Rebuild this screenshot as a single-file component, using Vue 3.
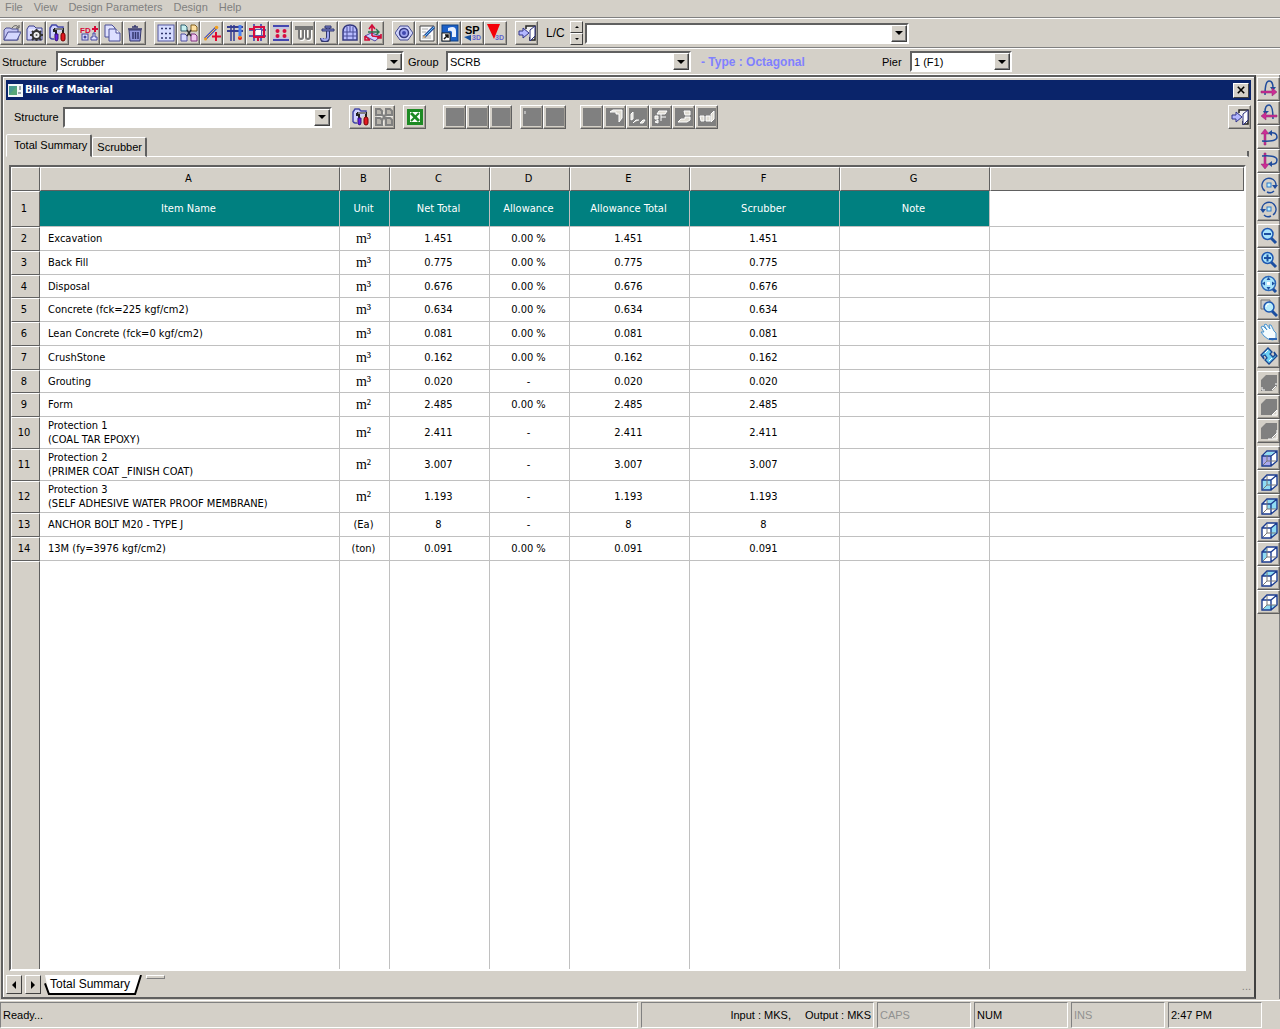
<script setup>
import { ref } from 'vue'

const menus = ['File', 'View', 'Design Parameters', 'Design', 'Help']

const folder = '<path d="M1 16V5l2-3h5l2 2h6v12z" fill="#d4d6ff" stroke="#3b3f8c"/><path d="M3 6h12" stroke="#fff"/>'
const tools = '<path d="M1 14V4l2-3h4l2 2h5v3M1 14l2 1h2" fill="#d0d2ff" stroke="#4448a8" stroke-width="1.500"/><path d="M5 5h10M7 5v5M14 5v4M5 5v3" fill="none" stroke="#222" stroke-width="2"/><path d="M6 5h8" stroke="#ddd"/><path d="M6 10h3v5l-1 2-2-1z" fill="#6820e8" stroke="#301080"/><rect x="12" y="9" width="4" height="8" rx="2" fill="#e01820" stroke="#700"/>'
const door = '<path d="M8 5V2h9v14h-5v-3" fill="#f0f0f0" stroke="#222" stroke-width="1.500"/><path d="M12 6l5-4v10l-5 5z" fill="#fff" stroke="#2a2e80"/><path d="M1 7h4V4l6 5-6 5v-3H1z" fill="#b4b8ff" stroke="#30348c"/>'
const cubeEdges = '<path d="M2 7h9v10H2zM2 7l5-5h10v10l-6 5M11 7l6-5" fill="none" stroke="#1c3c90" stroke-width="1.4"/><path d="M7 3v9h9M7 12l-4 4" fill="none" stroke="#777"/>'
const cube = (face, color = '#8fdcf4') => `<path d="M2 7l5-5h10v10l-6 5H2z" fill="#fff"/><path d="${face}" fill="${color}"/>${cubeEdges}`
const lens = (inner) => `<path d="M11 11l5 5" stroke="#1c4fa0" stroke-width="3"/><circle cx="7.500" cy="7" r="5.500" fill="#a8e4fc" stroke="#1c56b0" stroke-width="1.500"/>${inner}`
const ghost = (d) => `<rect width="18" height="18" fill="#808080"/><path d="${d}" fill="#dedbd2" stroke="#fff"/>`
const solid = (d) => `<path d="M1 6l5-5h11v11l-5 5H1z" fill="#808080"/><path d="${d}" fill="none" stroke="#fff"/>`
const label = (t, x, y, size, color) => `<text x="${x}" y="${y}" font-family="Liberation Sans, sans-serif" font-weight="bold" font-size="${size}" fill="${color}">${t}</text>`

const icons = {
  open: '<path d="M1 16V6l2-2h4l2 1h6v11z" fill="#c4c6f4" stroke="#4a4e90"/><path d="M1 16L5 8h13l-4 8z" fill="#d4d8ff" stroke="#484c90"/><path d="M9 4c2-3 5-3 6-1m1-2v3h-3" fill="none" stroke="#555"/>',
  settings: folder + '<circle cx="10.500" cy="11" r="4" fill="#eee" stroke="#333" stroke-width="2"/><path d="M10.500 5v2m0 8v2M4 11h2m9 0h2M6 7l2 2m5 5l2 2m0-9l-2 2m-5 5l-2 2" stroke="#333" stroke-width="2"/><circle cx="10.500" cy="11" r="1" fill="#555"/>',
  tools,
  fd: label('FD', 0, 9, 8, '#d80838') + '<path d="M15 2v6M12 5h6" stroke="#d80838" stroke-width="2"/><rect x="2" y="10" width="6" height="6" fill="#ddf" stroke="#4448a0"/><circle cx="5" cy="13" r="1.500" fill="#4448a0"/><path d="M13 9h2v4h2v3h-6v-3h2z" fill="#ddf" stroke="#4448a0"/>',
  copy: '<path d="M2 1h7l3 3v9H2z" fill="#e0e2ff" stroke="#4a4e98"/><path d="M6 5h7l4 4v8H6z" fill="#dcdfff" stroke="#4a4e98"/><path d="M13 5v4h4" fill="#fff" stroke="#4a4e98"/>',
  trash: '<path d="M3 6h12l-1 11H4z" fill="#9498e0" stroke="#33366e"/><path d="M2 5h14M6 3h6M7 8v7M9.500 8v7M12 8v7M9 1v2" stroke="#33366e" stroke-width="1.500"/>',
  dots: '<rect x="1" y="1" width="16" height="16" fill="#d6dcff" stroke="#5458a0"/><path d="M4 4.500h11M4 9.500h11M4 14h11" stroke="#30366e" stroke-width="1.500" stroke-dasharray="2 2"/>',
  pages: '<path d="M1 1h4l2 2v4H1z" fill="#c8f0f0" stroke="#306070"/><path d="M11 1h4l2 2v4h-6z" fill="#ffe0a0" stroke="#806020"/><path d="M1 10h4l2 2v5H1z" fill="#d8d8ff" stroke="#5050a0"/><path d="M11 10h4l2 2v5h-6z" fill="#f0c8f0" stroke="#803080"/><path d="M7 6l4 6m0-6l-4 6" stroke="#333" stroke-width="1.500"/>',
  line: '<path d="M2 15L13 4" stroke="#4850c0" stroke-width="3"/><path d="M2 15L13 4" stroke="#ffd040"/><circle cx="2.500" cy="15" r="1.500" fill="#f0a020"/><circle cx="13.500" cy="3.500" r="1.800" fill="#f0a020"/><path d="M13 8v9M9 12.500h9" stroke="#e00830" stroke-width="2"/>',
  columns: '<path d="M1 3h16M1 7h16" stroke="#343c90" stroke-width="2"/><path d="M5 1v16M8 1v16" stroke="#343c90" stroke-width="1.500"/><path d="M14 1v11" stroke="#4a80f0" stroke-width="3"/><circle cx="14" cy="14" r="2" fill="#e82018"/><path d="M14 12v2" stroke="#fc0"/>',
  frame: '<path d="M0 6h17M0 12h17M5 0v17M12 0v17" stroke="#5a5cb0" stroke-width="2"/><path d="M5 3h10v10H5zM0 5h5M9 13v4" fill="none" stroke="#d80c40" stroke-width="2"/><rect x="7" y="6" width="5" height="5" fill="#fff"/>',
  bolts: '<path d="M1 2h16M1 16h16" stroke="#4448b0" stroke-width="2"/><path d="M1 4h16M1 14h16" stroke="#b4b8f8"/><g fill="#d80c40"><circle cx="5.500" cy="7" r="2"/><circle cx="12.500" cy="7" r="2"/><circle cx="5.500" cy="12" r="2"/><circle cx="12.500" cy="12" r="2"/></g>',
  rebar: '<path d="M2 5h15M5 5v9q0 2 2 2t2-2V5M12 5v9q0 2 2 2t2-2V5" fill="none" stroke="#fff" stroke-width="2"/><path d="M1 3h16v2H1zM4 4v9q0 2 2 2t2-2V4M11 4v9q0 2 2 2t2-2V4" fill="none" stroke="#777" stroke-width="2"/>',
  anchor: '<path d="M10 2v11q0 4-3 4t-3-3" fill="none" stroke="#30366e" stroke-width="4"/><path d="M10 2v11q0 3-3 3t-3-2" fill="none" stroke="#a0a6f0" stroke-width="2"/><path d="M4 5h12v2H4zM7 2h6v2H7z" fill="#8088d8" stroke="#30366e"/>',
  arch: '<path d="M2 16V8q0-7 7-7t7 7v8z" fill="#b8bcff" stroke="#343880" stroke-width="1.500"/><path d="M2 8h14M2 12h14M6 3v13M12 3v13M9 1v7" stroke="#484c98"/>',
  axes: '<path d="M1 12l6-3 10 3-6 5z" fill="#d0d0ff" stroke="#5048a0"/><path d="M8 12V2M5 5l3-4 3 4" fill="none" stroke="#d00c38" stroke-width="1.600"/><path d="M4 8h11M12 5l3 3-3 3" fill="none" stroke="#287050" stroke-width="1.400"/><path d="M8 12l9 1M1 12l5 4M1 12v4h5M17 10v4h-4" fill="none" stroke="#d00c38" stroke-width="1.600"/>',
  nut: '<path d="M5 2h8l5 7-5 7H5L0 9z" fill="#d0d4fc" stroke="#444a90"/><circle cx="9" cy="9" r="4.500" fill="#a0a6f0" stroke="#343880" stroke-width="1.500"/><circle cx="9" cy="9" r="2" fill="#4048b0"/>',
  edit: '<path d="M2 2h14v15H2z" fill="#fafafa" stroke="#444"/><path d="M4 5h6M4 8h4M4 12h9M4 14h9" stroke="#aaa"/><path d="M16 3L6 13" stroke="#28489c" stroke-width="3"/><path d="M16 3L7 12" stroke="#60c8f0"/><path d="M5 14l1-3 2 2z" fill="#e8b060"/>',
  launch: '<rect x="1" y="1" width="16" height="16" fill="#1c60c8" stroke="#104080"/><path d="M7 4q8-3 8 3v6h-4V8q-1-2-4-1z" fill="#e8f0ff"/><rect x="1" y="9" width="8" height="8" fill="#fff" stroke="#222"/><path d="M3 15l4-4M4 11h3v3" fill="none" stroke="#111" stroke-width="1.500"/>',
  sp: label('SP', 1, 10, 11, '#000') + '<path d="M0 13l7-2v6z" fill="#1450a0"/>' + label('3D', 8, 16, 7, '#6064d0'),
  tri: '<path d="M0 0h13L7 15z" fill="#f40008"/>' + label('3D', 8, 16, 7, '#6064d0'),
  door,
  pagesOff: '<path d="M2 2h4l2 2v4H2zM12 2h4l2 2v4h-6zM2 11h4l2 2v4H2zM12 11h4l2 2v4h-6z" fill="none" stroke="#fff"/><path d="M1 1h4l2 2v4H1zM11 1h4l2 2v4h-6zM1 10h4l2 2v5H1zM11 10h4l2 2v5h-6z" fill="#b8b4ac" stroke="#808080" stroke-width="2"/><path d="M7 6l4 6m0-6l-4 6" stroke="#808080" stroke-width="2"/>',
  excel: '<rect x="1" y="1" width="16" height="16" fill="#1d8a24"/><rect x="4" y="4" width="10" height="10" fill="#fff"/><path d="M5 5l8 8" stroke="#1d8a24" stroke-width="3"/><path d="M13 5l-8 8" stroke="#1d8a24" stroke-width="2"/>',
  blank: '<rect width="18" height="18" fill="#808080"/>',
  speck: '<rect width="18" height="18" fill="#808080"/><path d="M2 3v3" stroke="#eee"/>',
  g1: ghost('M4 4l3-2h9v8l-3 4V6h-3V4z'),
  g2: ghost('M2 12V6l2-2v7zM4 15l3-3h3M11 15l3-3h2l-2 3z'),
  g3: ghost('M7 3h8l-2 3H5zM3 8h3v3H3zM3 14l3-2v3zM9 6v7m0-4h5'),
  g4: ghost('M9 3h6v4h-5zM10 9h5v3l-3 2H3l3-3h4z'),
  g5: ghost('M2 8h4v5H3zM8 8h4v5H8zM13 6l3-3v8l-3 3z'),
  s1: solid('M2 13v3h3M16 12l-4 4M15 10h2'),
  s2: solid('M17 12l-5 5M12 17h5v-5'),
  s3: solid('M17 8v9H8M12 16l5-5'),
  rotR: '<path d="M5 15Q5 1 9 1t4 7" fill="none" stroke="#204c9c" stroke-width="1.500"/><path d="M10 7h6l-3 4z" fill="#204c9c"/><path d="M1 11h11V8l5 4-5 4v-3H1z" fill="#cc2c94" stroke="#8c2870" stroke-width=".5"/>',
  rotL: '<path d="M13 15Q13 1 9 1t-4 7" fill="none" stroke="#204c9c" stroke-width="1.500"/><path d="M3 7h6l-4 4z" fill="#204c9c"/><path d="M17 11H6V8l-5 4 5 4v-3h11z" fill="#cc2c94" stroke="#8c2870" stroke-width=".5"/>',
  rotU: '<path d="M4 17V6H1l4-5 4 5H6v11z" fill="#cc2c94" stroke="#8c2870" stroke-width=".5"/><path d="M2 13q15 1 15-4t-7-4" fill="none" stroke="#204c9c" stroke-width="1.500"/><path d="M12 2v6L8 5z" fill="#204c9c"/>',
  rotD: '<path d="M4 1v11H1l4 5 4-5H6V1z" fill="#cc2c94" stroke="#8c2870" stroke-width=".5"/><path d="M2 4q15-1 15 4t-7 4" fill="none" stroke="#204c9c" stroke-width="1.500"/><path d="M12 9v6l-4-3z" fill="#204c9c"/>',
  cw: '<path d="M5 15A7 7 0 1 1 16 10M14 15q-3 3-7 1" fill="none" stroke="#204c9c" stroke-width="1.500"/><path d="M12 9h6l-3 4z" fill="#204c9c"/><rect x="7" y="7" width="4" height="4" fill="#bff0ff" stroke="#3078c8"/>',
  ccw: '<path d="M13 15A7 7 0 1 0 2 10M4 15q3 3 7 1" fill="none" stroke="#204c9c" stroke-width="1.500"/><path d="M0 9h6l-3 4z" fill="#204c9c"/><rect x="7" y="7" width="4" height="4" fill="#bff0ff" stroke="#3078c8"/>',
  zoomOut: lens('<path d="M4 7h7" stroke="#1c4fa0" stroke-width="2"/>'),
  zoomIn: lens('<path d="M4 7h7M7.500 3.500v7" stroke="#1c4fa0" stroke-width="2"/>'),
  zoomFit: '<circle cx="8.500" cy="8.500" r="7" fill="#a8e4fc" stroke="#2c68b8" stroke-width="1.500"/><path d="M8.500 2l2 3h-4zM8.500 15l2-3h-4zM2 8.500l3-2v4zM15 8.500l-3-2v4z" fill="#1c4fa0"/><rect x="7" y="7" width="3" height="3" fill="#fff"/><path d="M13 14l3 3" stroke="#1c4fa0" stroke-width="3"/>',
  zoomWin: '<path d="M1 1h9v9H1z" fill="#ccc" stroke="#777"/><path d="M12 12l5 5" stroke="#1c4fa0" stroke-width="3"/><circle cx="9" cy="8" r="5" fill="#b8ecfc" stroke="#1c56b0" stroke-width="1.500"/><path d="M6 8q0-3 3-3" fill="none" stroke="#fff"/>',
  pan: '<path d="M8 16L4 13 1 9l3 0-3-5 2-1 4 4-3-5 2-1 4 5-1-4 2 0 3 6 2 2v5l-3 2z" fill="#f4fcff" stroke="#4a94d0"/><path d="M9 16h8" stroke="#2c68b8" stroke-width="2"/>',
  spin: '<path d="M1 8l5-5 2-2 4 4-2 2 3 3 2-2-1-3 3 4-5 5-3 3-4-4 2-2-2-3-2 1 1 3z" fill="#6cd0f4" stroke="#1c4890" stroke-width="1.300"/><path d="M5 6l3-3M9 14l3-3" stroke="#fff"/>',
  c1: cube('M2 7h9v10H2z', '#aaa8ec') + '<path d="M7 3h8l-4 3H4z" fill="#8fdcf4"/>',
  c2: cube('M2 7h9v10H2z'),
  c3: cube('M7 2h10v10H7z'),
  c4: cube('M11 7l6-5v10l-6 5z'),
  c5: cube('M2 7l5-5v10l-5 5z'),
  c6: cube('M2 7l5-5h10l-6 5z'),
  c7: cube('M2 17l5-5h10l-6 5z')
}

const mainGroups = [
  ['open', 'settings', 'tools'],
  ['fd', 'copy', 'trash'],
  ['dots', 'pages', 'line', 'columns', 'frame', 'bolts', 'rebar', 'anchor', 'arch', 'axes'],
  ['nut', 'edit', 'launch', 'sp', 'tri'],
  ['door']
]
const billGroups = [
  ['tools', 'pagesOff'],
  ['excel'],
  ['blank', 'blank', 'blank'],
  ['speck', 'blank'],
  ['blank', 'g1', 'g2', 'g3', 'g4', 'g5']
]
const viewGroups = [
  ['rotR', 'rotL', 'rotU', 'rotD', 'cw', 'ccw'],
  ['zoomOut', 'zoomIn', 'zoomFit', 'zoomWin', 'pan', 'spin'],
  ['s1', 's2', 's3'],
  ['c1', 'c2', 'c3', 'c4', 'c5', 'c6', 'c7']
]

const letters = ['A', 'B', 'C', 'D', 'E', 'F', 'G']
const titles = ['Item Name', 'Unit', 'Net Total', 'Allowance', 'Allowance Total', 'Scrubber', 'Note']
const rows = [
  ['Excavation', 'm³', '1.451', '0.00 %'],
  ['Back Fill', 'm³', '0.775', '0.00 %'],
  ['Disposal', 'm³', '0.676', '0.00 %'],
  ['Concrete (fck=225 kgf/cm2)', 'm³', '0.634', '0.00 %'],
  ['Lean Concrete (fck=0 kgf/cm2)', 'm³', '0.081', '0.00 %'],
  ['CrushStone', 'm³', '0.162', '0.00 %'],
  ['Grouting', 'm³', '0.020', '-'],
  ['Form', 'm²', '2.485', '0.00 %'],
  ['Protection 1\n(COAL TAR EPOXY)', 'm²', '2.411', '-'],
  ['Protection 2\n(PRIMER COAT _FINISH COAT)', 'm²', '3.007', '-'],
  ['Protection 3\n(SELF ADHESIVE WATER PROOF MEMBRANE)', 'm²', '1.193', '-'],
  ['ANCHOR BOLT M20 - TYPE J', '(Ea)', '8', '-'],
  ['13M (fy=3976 kgf/cm2)', '(ton)', '0.091', '0.00 %']
]
const structure = ref('Scrubber')
const tab = ref('Total Summary')
</script>

<template>
  <div class="app">
    <nav class="menu">
      <a v-for="m in menus" :key="m" href="#">{{ m }}</a>
    </nav>

    <div class="toolbar">
      <div v-for="(g, i) in mainGroups" :key="i" class="group">
        <button v-for="n in g" :key="n" class="tool" type="button" :aria-label="n">
          <svg viewBox="0 0 18 18" v-html="icons[n]"></svg>
        </button>
      </div>
      <label class="p-case" for="lc">L/C</label>
      <span class="spin">
        <button type="button" aria-label="Previous"><i class="up"></i></button>
        <button type="button" aria-label="Next"><i class="down"></i></button>
      </span>
      <span class="combo case"><select id="lc"><option></option></select><b><i></i></b></span>
    </div>

    <div class="props">
      <label class="p-structure" for="structure">Structure</label>
      <span class="combo c-structure"><select id="structure" v-model="structure"><option>Scrubber</option></select><b><i></i></b></span>
      <label class="p-group" for="group">Group</label>
      <span class="combo c-group"><select id="group"><option>SCRB</option></select><b><i></i></b></span>
      <strong class="type">- Type : Octagonal</strong>
      <label class="p-pier" for="pier">Pier</label>
      <span class="combo c-pier"><select id="pier"><option>1 (F1)</option></select><b><i></i></b></span>
    </div>

    <div class="work">
      <section class="window">
        <header class="title">
          <svg class="logo" viewBox="0 0 15 13"><rect width="15" height="13" fill="#f4f8f8" /><rect x="1" y="2" width="8" height="9" fill="#4a9a90" /><path d="M1 11L9 2v9z" fill="#58a878" /><path d="M12 2v4M10 9h3" stroke="#456" /></svg>
          <h1>Bills of Material</h1>
          <button type="button" class="close" aria-label="Close">
            <svg viewBox="0 0 10 10"><path d="M1 1l8 8M9 1L1 9" stroke="#000" stroke-width="2" /></svg>
          </button>
        </header>

        <div class="bills">
          <label for="bill">Structure</label>
          <span class="combo c-bill"><select id="bill"><option></option></select><b><i></i></b></span>
          <div v-for="(g, i) in billGroups" :key="i" class="group" :class="'bill-' + i">
            <button v-for="(n, j) in g" :key="j" class="tool" type="button" :aria-label="n">
              <svg viewBox="0 0 18 18" v-html="icons[n]"></svg>
            </button>
          </div>
          <button class="tool exit" type="button" aria-label="Exit">
            <svg viewBox="0 0 18 18" v-html="icons.door"></svg>
          </button>
        </div>

        <div class="tabs">
          <button v-for="t in ['Total Summary', 'Scrubber']" :key="t" type="button" :class="{ on: tab === t }" @click="tab = t">{{ t }}</button>
          <span class="rule"></span>
        </div>

        <div class="sheet">
          <table>
            <colgroup>
              <col class="w-num"><col class="w-a"><col class="w-b"><col class="w-c"><col class="w-d"><col class="w-e"><col class="w-f"><col class="w-f"><col>
            </colgroup>
            <thead>
              <tr><th></th><th v-for="l in letters" :key="l">{{ l }}</th><th></th></tr>
            </thead>
            <tbody>
              <tr class="heads">
                <th>1</th>
                <td v-for="t in titles" :key="t">{{ t }}</td>
                <td class="rest"></td>
              </tr>
              <tr v-for="(r, i) in rows" :key="i" :class="{ tall: r[0].includes('\n') }">
                <th>{{ i + 2 }}</th>
                <td class="name">{{ r[0] }}</td>
                <td :class="{ unit: r[1][0] === 'm' }">{{ r[1] }}</td>
                <td>{{ r[2] }}</td>
                <td>{{ r[3] }}</td>
                <td>{{ r[2] }}</td>
                <td>{{ r[2] }}</td>
                <td></td>
                <td></td>
              </tr>
              <tr class="fill"><th></th><td v-for="n in 8" :key="n"></td></tr>
            </tbody>
          </table>
        </div>

        <footer class="sheets">
          <button type="button" aria-label="Previous sheet"><i class="left"></i></button>
          <button type="button" aria-label="Next sheet"><i class="right"></i></button>
          <div class="sheet-tab">
            <svg viewBox="0 0 100 19" preserveAspectRatio="none"><path d="M1 0l4 18h88l6-18z" fill="#fff" /><path d="M1 8l4 10h88l6-18" fill="none" stroke="#000" stroke-width="2" /></svg>
            <span>Total Summary</span>
          </div>
          <span class="stub"></span>
          <span class="grip">...</span>
        </footer>
      </section>

      <aside class="views">
        <div v-for="(g, i) in viewGroups" :key="i" class="stack">
          <button v-for="n in g" :key="n" class="tool" type="button" :aria-label="n">
            <svg viewBox="0 0 18 18" v-html="icons[n]"></svg>
          </button>
        </div>
      </aside>
    </div>

    <footer class="status">
      <span>Ready...</span>
      <span class="units"><span>Input : MKS,</span><span>Output : MKS</span></span>
      <span class="off">CAPS</span>
      <span>NUM</span>
      <span class="off">INS</span>
      <span>2:47 PM</span>
    </footer>
  </div>
</template>

<style>
body {
  background: #d4d0c8;
}
</style>

<style scoped>
* {
  box-sizing: border-box;
}
.app {
  display: flex;
  flex-direction: column;
  min-width: 1060px;
  height: 100vh;
  min-height: 760px;
  overflow: hidden;
  background: #d4d0c8;
  color: #000;
  font: 11px/16px "Liberation Sans", sans-serif;
}
button,
select {
  margin: 0;
  padding: 0;
  font: inherit;
  color: inherit;
}
.menu {
  display: flex;
  gap: 11px;
  height: 18px;
  padding: 0 5px;
  border-bottom: 1px solid #808080;
  line-height: 14px;
}
.menu a {
  color: #808080;
  text-decoration: none;
}
.toolbar {
  display: flex;
  align-items: center;
  gap: 8px;
  height: 30px;
  border-top: 1px solid #fff;
  border-bottom: 1px solid #808080;
}
.group {
  display: flex;
}
.tool {
  display: flex;
  align-items: center;
  justify-content: center;
  width: 23px;
  height: 24px;
  background: #d4d0c8;
  border: 1px solid;
  border-color: #fff #606060 #606060 #fff;
  box-shadow: inset -1px -1px #a09c94;
}
.tool svg {
  display: block;
  width: 18px;
  height: 18px;
}
.p-case {
  width: 20px;
  font-size: 12px;
}
.spin {
  display: flex;
  flex-direction: column;
  width: 13px;
  margin-left: -4px;
  margin-right: -6px;
}
.spin button {
  display: flex;
  align-items: center;
  justify-content: center;
  height: 12px;
  background: #d4d0c8;
  border: 1px solid;
  border-color: #fff #404040 #404040 #fff;
}
.up {
  border: 2px solid transparent;
  border-top: 0;
  border-bottom-color: #000;
}
.down {
  border: 2px solid transparent;
  border-bottom: 0;
  border-top-color: #000;
}
.combo {
  display: grid;
  grid-template-columns: 1fr 16px;
  height: 21px;
  border: 2px solid;
  border-color: #606060 #fff #fff #606060;
  background: #fff;
}
.combo select {
  grid-area: 1 / 1 / 2 / 3;
  appearance: none;
  width: 100%;
  padding-left: 2px;
  border: 0;
  background: transparent;
}
.combo b {
  grid-area: 1 / 2;
  display: flex;
  align-items: center;
  justify-content: center;
  pointer-events: none;
  background: #d4d0c8;
  border: 1px solid;
  border-color: #fff #404040 #404040 #fff;
  box-shadow: inset -1px -1px #808080;
}
.combo i {
  border: 4px solid transparent;
  border-bottom: 0;
  border-top-color: #000;
}
.case {
  width: 324px;
}
.props {
  display: flex;
  align-items: center;
  height: 27px;
  border-top: 1px solid #fff;
  border-bottom: 1px solid #fff;
}
.p-structure {
  width: 56px;
  padding-left: 2px;
}
.c-structure {
  width: 348px;
}
.p-group {
  width: 42px;
  padding-left: 4px;
}
.c-group {
  width: 245px;
}
.type {
  width: 191px;
  padding-left: 10px;
  color: #8080ff;
  font-size: 12px;
}
.p-pier {
  width: 28px;
}
.c-pier {
  width: 102px;
}
.work {
  flex: 1;
  display: flex;
  min-height: 0;
}
.window {
  flex: 1;
  display: flex;
  flex-direction: column;
  min-width: 0;
  margin-left: 1px;
  padding: 3px;
  border: 2px solid #606060;
  border-right-color: #404040;
  box-shadow: inset 1px 1px #fff;
}
.title {
  display: flex;
  align-items: center;
  gap: 2px;
  height: 20px;
  padding: 0 2px;
  background: #0a246a;
  color: #fff;
}
.logo {
  width: 15px;
  height: 13px;
}
.title h1 {
  flex: 1;
  margin: 0;
  font: bold 11px/16px "DejaVu Sans Condensed", sans-serif;
}
.close {
  display: flex;
  align-items: center;
  justify-content: center;
  width: 16px;
  height: 15px;
  background: #d4d0c8;
  border: 1px solid;
  border-color: #fff #404040 #404040 #fff;
}
.close svg {
  width: 8px;
  height: 8px;
}
.bills {
  display: flex;
  align-items: center;
  height: 34px;
  padding-left: 8px;
}
.bills label {
  width: 49px;
}
.c-bill {
  width: 269px;
}
.bill-0 {
  margin-left: 17px;
}
.bill-1,
.bill-3 {
  margin-left: 8px;
}
.bill-2 {
  margin-left: 17px;
}
.bill-4 {
  margin-left: 14px;
}
.exit {
  margin-left: auto;
}
.tabs {
  display: flex;
  align-items: flex-end;
  height: 23px;
  margin-right: 2px;
}
.tabs button {
  height: 20px;
  padding: 0 3px 0 4px;
  background: #d4d0c8;
  border: solid;
  border-width: 1px 2px 1px 1px;
  border-color: #fff #606060 #fff #fff;
  border-radius: 2px 2px 0 0;
}
.tabs .on {
  height: 23px;
  padding: 0 3px 2px 7px;
  border-bottom-color: transparent;
}
.rule {
  flex: 1;
  height: 6px;
  border-right: 2px solid #606060;
  border-bottom: 1px solid #fff;
}
.sheet {
  flex: 1;
  min-height: 0;
  margin: 8px 5px 0 3px;
  border: 2px solid;
  border-color: #606060 #fff #fff #606060;
  background: #fff;
}
table {
  width: 100%;
  height: 100%;
  table-layout: fixed;
  border-collapse: separate;
  border-spacing: 0;
  font: 11px/14px "DejaVu Sans Condensed", sans-serif;
}
.w-num {
  width: 29px;
}
.w-a {
  width: 300px;
}
.w-b {
  width: 50px;
}
.w-c {
  width: 100px;
}
.w-d {
  width: 80px;
}
.w-e {
  width: 120px;
}
.w-f {
  width: 150px;
}
th {
  height: 24px;
  padding: 0 3px 0 0;
  font-weight: normal;
  background: #d4d0c8;
  border: 1px solid;
  border-color: #fff #606060 #606060 #fff;
}
td {
  height: 24px;
  padding: 1px 2px 0 0;
  text-align: center;
  border: solid #c0c0c0;
  border-width: 0 1px 1px 0;
}
tr > td:last-child {
  border-right: 0;
}
tbody tr:nth-child(4n):not(.tall) > * {
  height: 23px;
}
tbody .heads > * {
  height: 36px;
}
.heads td {
  background: #008080;
  color: #fff;
}
.heads .rest {
  background: #fff;
}
tbody .tall > * {
  height: 32px;
}
.name {
  padding-left: 8px;
  text-align: left;
  white-space: pre-line;
}
.unit {
  font: 14px/18px "Liberation Serif", serif;
}
tbody .fill > * {
  height: auto;
  border-bottom: 0;
}
.sheets {
  display: flex;
  height: 23px;
  padding-top: 4px;
}
.sheets button {
  display: flex;
  align-items: center;
  justify-content: center;
  width: 16px;
  height: 19px;
  margin-right: 3px;
  background: #d4d0c8;
  border: 1px solid;
  border-color: #fff #404040 #404040 #fff;
}
.left,
.right {
  border: 4px solid transparent;
}
.left {
  border-left: 0;
  border-right-color: #000;
}
.right {
  border-right: 0;
  border-left-color: #000;
}
.sheet-tab {
  display: grid;
  width: 98px;
  height: 20px;
  font-size: 12px;
  line-height: 19px;
}
.sheet-tab > * {
  grid-area: 1 / 1;
  width: 100%;
  height: 20px;
}
.sheet-tab span {
  z-index: 1;
  padding-left: 6px;
}
.stub {
  width: 19px;
  height: 4px;
  margin-left: 4px;
  border: 1px solid;
  border-color: #fff #808080 #808080 #fff;
}
.grip {
  margin-left: auto;
  align-self: flex-end;
  color: #808080;
}
.views {
  display: flex;
  flex-direction: column;
  gap: 3px;
  width: 24px;
  padding: 2px 0 0 1px;
  border-right: 1px solid #808080;
}
.status {
  display: grid;
  grid-template-columns: 1fr 233px 94px 94px 94px 94px;
  gap: 3px;
  height: 29px;
  margin-top: 1px;
  padding: 1px 18px 1px 0;
  border-top: 1px solid #fff;
}
.status > span {
  padding: 4px 2px;
  border: 1px solid;
  border-color: #808080 #fff #fff #808080;
}
.status > .units {
  display: flex;
  justify-content: flex-end;
  gap: 14px;
}
.status > .off {
  color: #909090;
}
</style>
